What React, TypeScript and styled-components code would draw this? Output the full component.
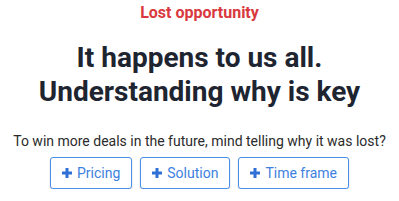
import React from "react";
import styled, { createGlobalStyle } from "styled-components";

const GlobalStyle = createGlobalStyle`
  body {
    margin: 0;
    background: #ffffff;
    font-family: Roboto, "Liberation Sans", sans-serif;
  }
`;

const Page = styled.div`
  display: flex;
  flex-direction: column;
  align-items: center;
  text-align: center;
  padding-top: 3px;
`;

const Eyebrow = styled.div`
  font-size: 16px;
  font-weight: 700;
  color: #d9383e;
`;

const Title = styled.h1`
  margin: 19px 0 0;
  font-size: 28px;
  line-height: 34px;
  font-weight: 700;
  color: #1e2530;
`;

const Question = styled.p`
  margin: 24px 0 0;
  font-size: 14px;
  color: #2b2b2b;
`;

const Reasons = styled.div`
  display: flex;
  gap: 8px;
  margin-top: 8px;
`;

const ReasonButton = styled.button`
  display: flex;
  align-items: center;
  gap: 5px;
  height: 32px;
  padding: 0 11px;
  border: 1px solid #4a8fe7;
  border-radius: 3px;
  background: #fff;
  box-shadow: 0 1px 2px rgba(0, 0, 0, 0.18);
  font-family: inherit;
  font-size: 14px;
  color: #3d7fe0;
  cursor: pointer;
`;

const PlusIcon = () => (
  <svg width="10" height="10" viewBox="0 0 10 10">
    <path d="M5 0v10M0 5h10" stroke="#2f6fd6" strokeWidth="3" />
  </svg>
);

const reasons = ["Pricing", "Solution", "Time frame"];

export default function App() {
  return (
    <>
      <GlobalStyle />
      <Page>
        <Eyebrow>Lost opportunity</Eyebrow>
        <Title>
          It happens to us all.
          <br />
          Understanding why is key
        </Title>
        <Question>To win more deals in the future, mind telling why it was lost?</Question>
        <Reasons>
          {reasons.map((r) => (
            <ReasonButton key={r}>
              <PlusIcon />
              {r}
            </ReasonButton>
          ))}
        </Reasons>
      </Page>
    </>
  );
}
